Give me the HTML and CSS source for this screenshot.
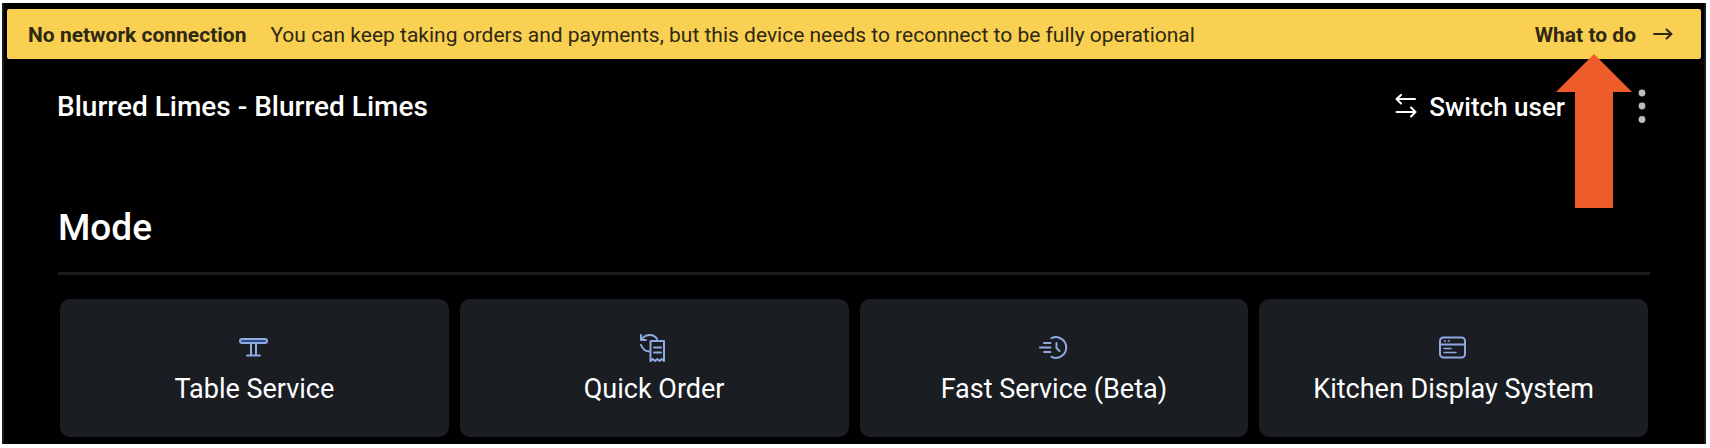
FILE: index.html
```html
<!DOCTYPE html>
<html lang="en">
<head>
  <meta charset="UTF-8" />
  <meta name="viewport" content="width=device-width, initial-scale=1" />
  <title>Blurred Limes</title>
  <link rel="stylesheet" href="styles.css">
</head>
<body>

<div class="app">
  <div class="banner" role="status">
    <strong class="banner-title">No network connection</strong>
    <span class="banner-text">You can keep taking orders and payments, but this device needs to reconnect to be fully operational</span>
    <a href="#" class="banner-link">
      What to do
      <svg width="20" height="14" viewBox="0 0 20 14" fill="none" stroke="currentColor" stroke-width="2" stroke-linecap="round" stroke-linejoin="round" aria-hidden="true">
        <path d="M1 6h17M13.500 1.500L18.500 6l-5 4.500" />
      </svg>
    </a>

    <!-- Arrow pointing at the banner link -->
    <svg class="pointer" width="76" height="154" viewBox="0 0 76 154" aria-hidden="true">
      <path d="M38 0L76 38H57V154H19V38H0z" fill="#ee5c2b" />
    </svg>
  </div>

  <header class="topbar">
    <div class="venue">Blurred Limes - Blurred Limes</div>
    <button type="button" class="switch-user">
      <svg width="22" height="26" viewBox="0 0 22 26" fill="none" stroke="currentColor" stroke-width="2" stroke-linecap="round" stroke-linejoin="round" aria-hidden="true">
        <path d="M20 5H2M6 1L1.500 5L6 9.500M1.500 18H20M16 13.500L20.500 18L16 22.500" />
      </svg>
      Switch user
    </button>
    <button type="button" class="more" aria-label="More options">
      <svg width="8" height="36" viewBox="0 0 8 36" fill="currentColor" aria-hidden="true">
        <circle cx="4" cy="4" r="3.400" />
        <circle cx="4" cy="17" r="3.400" />
        <circle cx="4" cy="30.500" r="3.400" />
      </svg>
    </button>
  </header>

  <main>
    <h1>Mode</h1>
    <div class="modes">
      <button type="button" class="mode">
        <svg class="icon" viewBox="1 0 30 30" aria-hidden="true">
          <rect x="2" y="6" width="27" height="4" rx="2" fill="#2c4a80" />
          <path d="M13 10v12M18 10v12M9 22.500h13" />
        </svg>
        Table Service
      </button>
      <button type="button" class="mode">
        <svg class="icon" viewBox="1 0 30 30" aria-hidden="true">
          <path d="M12.500 8h13.500v20l-2.300-2-2.200 2-2.250-2L17 28l-2.250-2-2.250 2z" />
          <path d="M16 14.500h7M16 19.500h7" />
          <path d="M4.500 5.500C8 .8 16 .8 19 6M3 2v5h5M3 12c1.500 4 5 6.500 9 6.500" />
        </svg>
        Quick Order
      </button>
      <button type="button" class="mode">
        <svg class="icon" viewBox="1 0 30 30" aria-hidden="true">
          <path d="M13.500 5.200A10.300 10.300 0 1 1 13.500 23.800" />
          <path d="M18.500 10v5l3 3" />
          <path d="M6 10h6.500M2 14.500h10.500M6 19h6.500" />
        </svg>
        Fast Service (Beta)
      </button>
      <button type="button" class="mode">
        <svg class="icon" viewBox="1 0 30 30" aria-hidden="true">
          <rect x="2" y="4.500" width="25" height="20" rx="3.500" />
          <path d="M2 11.500h25" />
          <path d="M6.500 8h1M10.500 8h1M6 15.500h7M6 19.500h12" stroke-width="1.500" />
        </svg>
        Kitchen Display System
      </button>
    </div>
  </main>
</div>

</body>
</html>
```

FILE: styles.css
```css
* {
  box-sizing: border-box;
}

body {
  margin: 0;
  padding: 3px 4px 4px 2px;
  background: #fff;
  font-family: Roboto, "Liberation Sans", sans-serif;
}

button {
  border: none;
  background: none;
  padding: 0;
  color: inherit;
  font: inherit;
  cursor: pointer;
}

.app {
  background: #000;
  color: #fff;
  border: 2px solid #1a1a1a;
  border-width: 0 2px;
  padding: 6px 3px 7px;
}

.banner {
  position: relative;
  display: flex;
  align-items: center;
  gap: 24px;
  min-height: 50px;
  padding: 2px 28px 0 21px;
  background: #f9d051;
  color: #2f2913;
  border-radius: 2px;
  font-size: 21px;
  line-height: 26px;
}

.banner-title {
  font-weight: 700;
}

.banner-link {
  display: flex;
  align-items: center;
  gap: 17px;
  margin-left: auto;
  color: inherit;
  font-weight: 700;
  text-decoration: none;
}

.pointer {
  position: absolute;
  top: 45px;
  right: 69px;
}

.topbar {
  display: flex;
  align-items: center;
  padding: 29px 55px 0 50px;
  font-size: 26px;
  font-weight: 500;
  line-height: 38px;
}

.venue {
  font-size: 28px;
}

.switch-user {
  display: flex;
  align-items: center;
  gap: 12px;
  margin-left: auto;
}

.more {
  display: flex;
  margin-left: 73px;
  color: #bdbdbd;
}

main {
  padding: 79px 51px 0;
}

h1 {
  margin: 0;
  padding-bottom: 21px;
  border-bottom: 3px solid #1c1c1c;
  font-size: 37px;
  font-weight: 500;
  line-height: 46px;
}

.modes {
  display: grid;
  grid-template-columns: repeat(4, 1fr);
  gap: 11px;
  padding: 24px 2px 0;
}

.mode {
  display: flex;
  flex-direction: column;
  align-items: center;
  gap: 9px;
  padding: 34px 12px 31px;
  background: #1a1d22;
  border-radius: 10px;
  font-size: 27px;
  line-height: 34px;
}

.icon {
  width: 30px;
  height: 30px;
  fill: none;
  stroke: #8fa9e2;
  stroke-width: 2;
  stroke-linecap: round;
  stroke-linejoin: round;
}
```
